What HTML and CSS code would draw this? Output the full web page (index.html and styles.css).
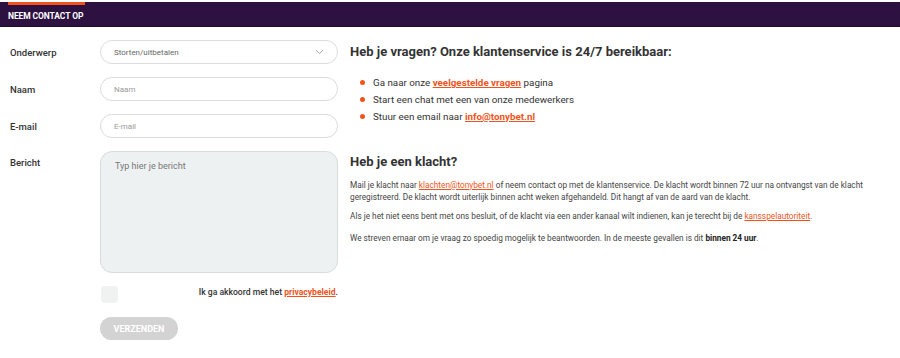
FILE: index.html
```html
<!DOCTYPE html>
<html lang="nl">
<head>
<meta charset="utf-8">
<title>Neem contact op</title>
<link rel="stylesheet" href="styles.css">
</head>
<body>
<header class="topbar">
  <div class="tab">NEEM CONTACT OP</div>
</header>
<main class="content">
  <form class="contact-form">
    <label class="label">Onderwerp</label>
    <div class="field select">
      <span class="value">Storten/uitbetalen</span>
      <svg class="chev" width="9" height="6" viewBox="0 0 9 6"><path d="M1 1.2 L4.5 4.6 L8 1.2" fill="none" stroke="#a9a9a9" stroke-width="1"/></svg>
    </div>
    <label class="label">Naam</label>
    <div class="field"><span class="placeholder">Naam</span></div>
    <label class="label">E-mail</label>
    <div class="field"><span class="placeholder">E-mail</span></div>
    <label class="label label-top">Bericht</label>
    <div class="textarea"><span class="ta-placeholder">Typ hier je bericht</span></div>
    <div></div>
    <div class="agree">
      <span class="checkbox"></span>
      <span class="agree-text">Ik ga akkoord met het <a class="link-bold" href="#">privacybeleid</a>.</span>
    </div>
    <div></div>
    <div><span class="button">VERZENDEN</span></div>
  </form>
  <section class="info">
    <h2 class="heading">Heb je vragen? Onze klantenservice is 24/7 bereikbaar:</h2>
    <ul class="bullets">
      <li>Ga naar onze <a class="link-bold" href="#">veelgestelde vragen</a> pagina</li>
      <li>Start een chat met een van onze medewerkers</li>
      <li>Stuur een email naar <a class="link-bold" href="#">info@tonybet.nl</a></li>
    </ul>
    <h2 class="heading heading-second">Heb je een klacht?</h2>
    <p class="para">Mail je klacht naar <a class="link" href="#">klachten@tonybet.nl</a> of neem contact op met de klantenservice. De klacht wordt binnen 72 uur na ontvangst van de klacht geregistreerd. De klacht wordt uiterlijk binnen acht weken afgehandeld. Dit hangt af van de aard van de klacht.</p>
    <p class="para">Als je het niet eens bent met ons besluit, of de klacht via een ander kanaal wilt indienen, kan je terecht bij de <a class="link" href="#">kansspelautoriteit</a>.</p>
    <p class="para para-last">We streven ernaar om je vraag zo spoedig mogelijk te beantwoorden. In de meeste gevallen is dit <b>binnen 24 uur</b>.</p>
  </section>
</main>
</body>
</html>
```
FILE: styles.css
```css
* { box-sizing: border-box; }
html, body { margin: 0; padding: 0; background: #fff; }
body {
  font-family: Roboto, "Liberation Sans", Arial, sans-serif;
  color: #333;
}
.topbar {
  margin-top: 2px;
  height: 25px;
  background: #2d1141;
  border-bottom: 1px solid #1f0a2e;
  padding-left: 8px;
}
.tab {
  display: inline-block;
  width: 77px;
  height: 100%;
  border-top: 3px solid #f0541c;
  color: #fff;
  font-size: 8.5px;
  font-weight: 700;
  line-height: 20px;
  padding-top: 1px;
  white-space: nowrap;
  letter-spacing: -0.1px;
}
.content {
  display: flex;
  padding: 13px 0 0 10px;
  gap: 12px;
}
.contact-form {
  display: grid;
  grid-template-columns: 90px 238px;
  row-gap: 13px;
  flex: none;
}
.label {
  font-size: 9.5px;
  font-weight: 500;
  color: #333;
  display: flex;
  align-items: center;
}
.label-top { align-items: flex-start; padding-top: 6px; }
.field {
  height: 24px;
  border: 1px solid #dcdcdc;
  border-radius: 12px;
  display: flex;
  align-items: center;
  justify-content: space-between;
  padding: 0 13px;
  font-size: 8px;
}
.select .value { color: #666; font-size: 8px; }
.placeholder { color: #9a9a9a; }
.chev { display: block; }
.textarea {
  height: 122px;
  border: 1px solid #d8dcdc;
  border-radius: 12px;
  background: #eef1f1;
  padding: 9px 14px;
  font-size: 9px;
}
.ta-placeholder { color: #777; }
.agree {
  display: flex;
  align-items: center;
  justify-content: space-between;
  height: 17px;
}
.checkbox {
  width: 17px;
  height: 17px;
  margin-left: 1px;
  border-radius: 4px;
  background: #f0f2f2;
}
.agree-text {
  font-size: 8.6px;
  font-weight: 500;
  color: #333;
  margin-top: -6px;
}
.button {
  display: inline-flex;
  align-items: center;
  justify-content: center;
  width: 78px;
  height: 23px;
  margin-top: 1px;
  border-radius: 12px;
  background: #d3d3d3;
  color: #fff;
  font-size: 9px;
  font-weight: 700;
}
.link-bold {
  color: #f0541c;
  font-weight: 700;
  text-decoration: underline;
}
.link {
  color: #f0541c;
  text-decoration: underline;
}
.info { flex: 1; min-width: 0; }
.heading {
  margin: 0;
  font-size: 13px;
  font-weight: 700;
  line-height: 24px;
  color: #333;
}
.heading-second { margin-top: 25px; margin-bottom: 5px; }
.bullets {
  list-style: none;
  margin: 10px 0 0;
  padding: 0 0 0 23px;
}
.bullets li {
  position: relative;
  font-size: 9.8px;
  line-height: 17px;
}
.bullets li::before {
  content: "";
  position: absolute;
  left: -13px;
  top: 6px;
  width: 5px;
  height: 5px;
  border-radius: 50%;
  background: #f0541c;
}
.para {
  margin: 0 0 7px;
  font-size: 8.25px;
  line-height: 12px;
  color: #444;
  padding-right: 10px;
}
.para-last { margin-top: 10px; }
.para b { color: #222; }
```
